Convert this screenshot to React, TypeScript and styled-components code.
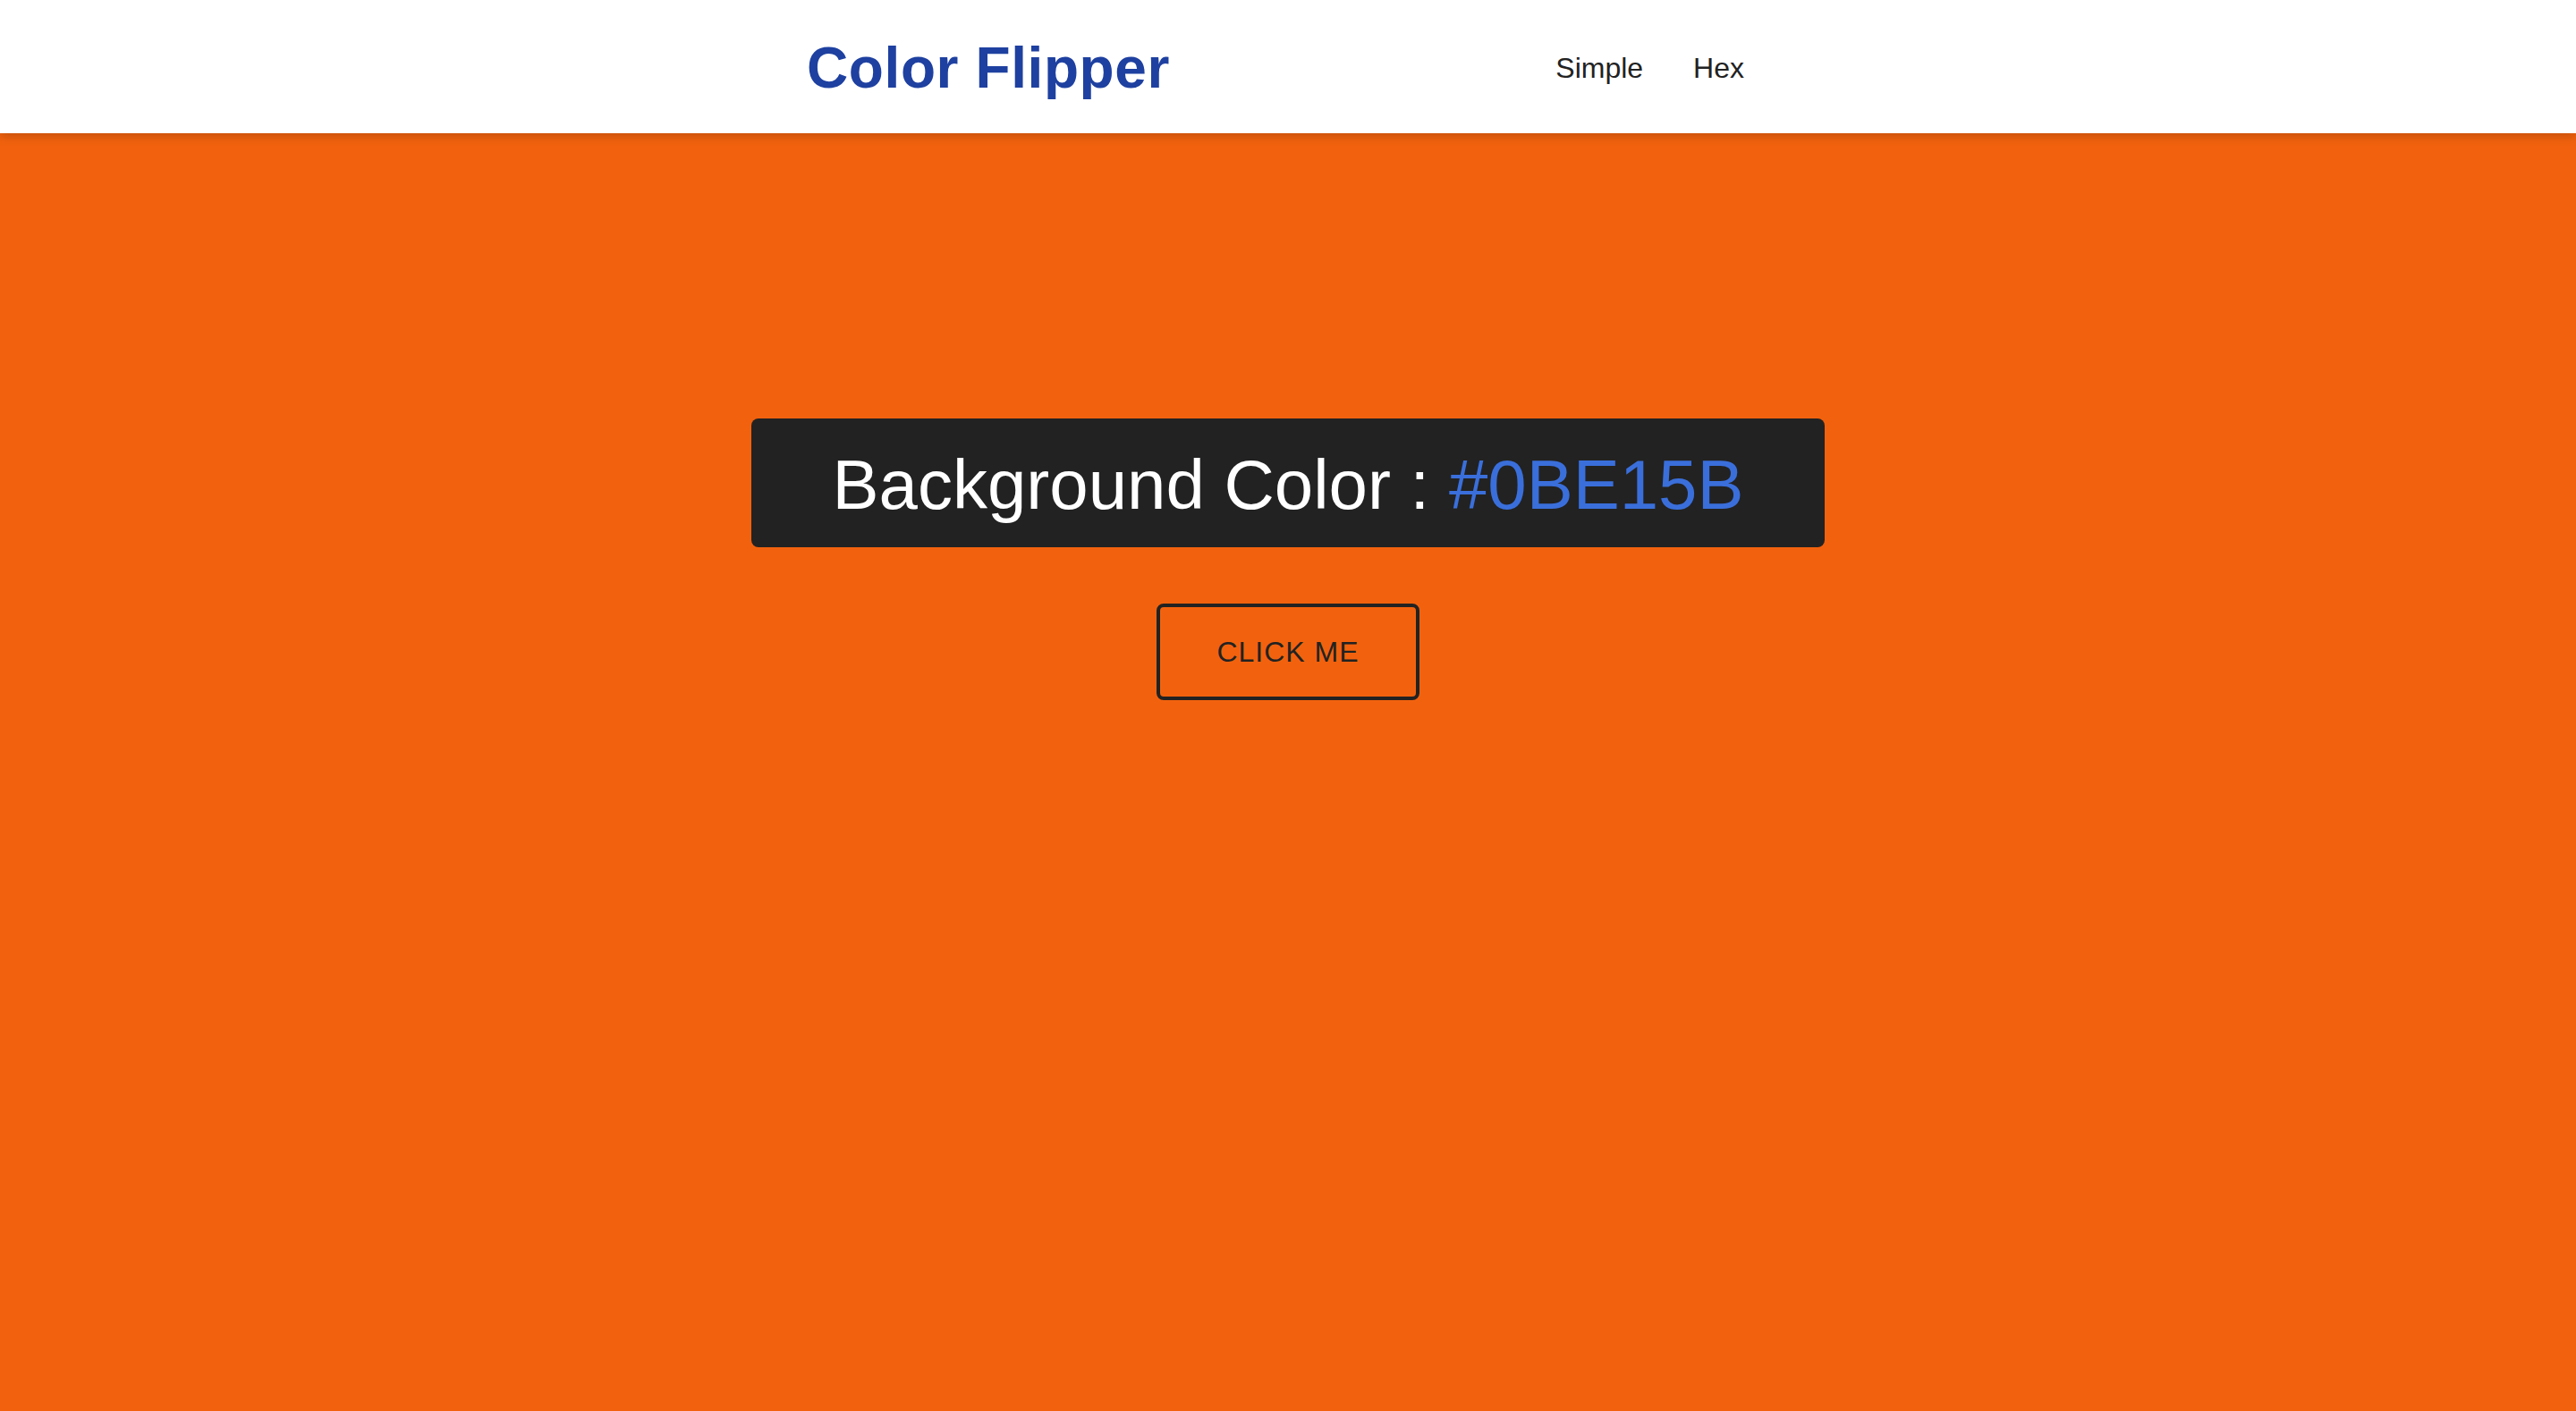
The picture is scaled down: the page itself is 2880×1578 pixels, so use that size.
import { useState } from "react"
import styled, { createGlobalStyle } from "styled-components"

const GlobalStyle = createGlobalStyle`
  * {
    box-sizing: border-box;
  }

  html,
  body {
    margin: 0;
    padding: 0;
  }

  body {
    font-family: "Liberation Sans", Arial, Helvetica, sans-serif;
    background: #f2620e;
  }
`

const Page = styled.div<{ $bg: string }>`
  min-height: 1578px;
  background-color: ${(p) => p.$bg};
`

const Nav = styled.nav`
  height: 149px;
  background: #ffffff;
  box-shadow: 0 4px 10px rgba(0, 0, 0, 0.18);
  position: relative;
  z-index: 1;
`

const NavCenter = styled.div`
  width: 1076px;
  height: 100%;
  margin: 0 auto;
  padding-top: 3px;
  display: flex;
  align-items: center;
  justify-content: space-between;
`

const Brand = styled.h4`
  margin: 0;
  font-size: 64px;
  font-weight: 700;
  color: #1e40a0;
  letter-spacing: 0.6px;
`

const NavLinks = styled.ul`
  list-style: none;
  margin: 0;
  padding: 0;
  display: flex;
`

const NavLink = styled.a`
  display: block;
  padding: 0 28px;
  font-size: 32px;
  color: #222222;
  text-decoration: none;
  cursor: pointer;
`

const Main = styled.main`
  display: flex;
  flex-direction: column;
  align-items: center;
  padding-top: 319px;
`

const ColorBox = styled.h2`
  margin: 0;
  width: 1200px;
  height: 144px;
  padding-top: 4px;
  display: flex;
  align-items: center;
  justify-content: center;
  background: #222222;
  border-radius: 8px;
  color: #ffffff;
  font-size: 78px;
  font-weight: 400;
  white-space: pre;
`

const ColorValue = styled.span`
  color: #3a6fdb;
`

const Button = styled.button`
  margin-top: 63px;
  width: 294px;
  height: 108px;
  background: transparent;
  border: 4px solid #222222;
  border-radius: 8px;
  font-family: "Liberation Sans", Arial, Helvetica, sans-serif;
  font-size: 32px;
  letter-spacing: 1px;
  color: #222222;
  text-transform: uppercase;
  cursor: pointer;
`

export default function App() {
  const [hex, setHex] = useState("#0BE15B")
  const bg = "#f2620e"

  const flip = () => {
    const chars = "0123456789ABCDEF"
    let next = "#"
    for (let i = 0; i < 6; i++) {
      next += chars[Math.floor(Math.random() * 16)]
    }
    setHex(next)
  }

  return (
    <Page $bg={bg}>
      <GlobalStyle />
      <Nav>
        <NavCenter>
          <Brand>Color Flipper</Brand>
          <NavLinks>
            <li>
              <NavLink>Simple</NavLink>
            </li>
            <li>
              <NavLink>Hex</NavLink>
            </li>
          </NavLinks>
        </NavCenter>
      </Nav>
      <Main>
        <ColorBox>
          Background Color : <ColorValue>{hex}</ColorValue>
        </ColorBox>
        <Button onClick={flip}>Click me</Button>
      </Main>
    </Page>
  )
}
